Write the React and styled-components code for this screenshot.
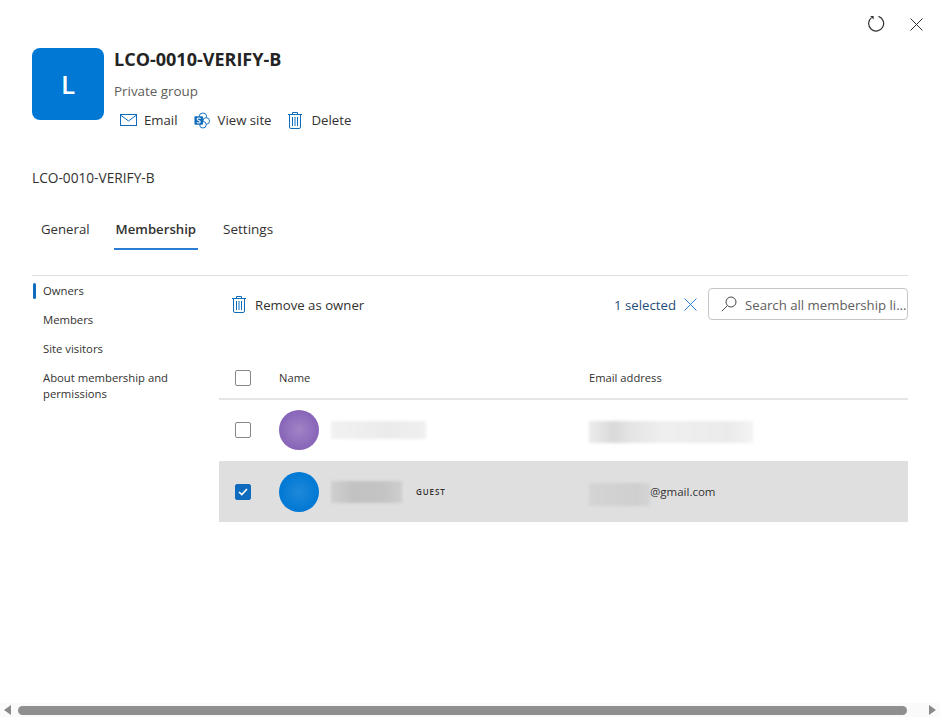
import React from "react";
import styled, { createGlobalStyle } from "styled-components";

const GlobalStyle = createGlobalStyle`
  html, body {
    margin: 0;
    padding: 0;
    background: #fff;
    overflow: hidden;
  }
  body {
    font-family: "Open Sans", "Noto Sans", "Liberation Sans", sans-serif;
    color: #323130;
  }
`;

const BLUE = "#0f6cbd";

const MailIcon = () => (
  <svg width="17" height="14" viewBox="0 0 17 14" fill="none" stroke={BLUE} strokeWidth="1">
    <rect x="0.5" y="1.5" width="16" height="11" />
    <path d="M0.5 2 L8.5 8 L16.5 2" />
  </svg>
);

const SiteIcon = () => (
  <svg width="16" height="17" viewBox="0 0 17 18" fill="none">
    <circle cx="9.5" cy="5" r="4" fill="#fff" stroke={BLUE} />
    <circle cx="13" cy="9.5" r="3.5" fill="#fff" stroke={BLUE} />
    <circle cx="9.5" cy="13.5" r="3.5" fill="#fff" stroke={BLUE} />
    <rect x="0.5" y="4.5" width="9" height="9" rx="1" fill="#0f6cbd" />
    <path d="M7 7 C6 6 3.4 6.2 3.4 7.7 C3.4 9.3 6.6 8.8 6.6 10.4 C6.6 11.9 4 12 3 11" stroke="#fff" strokeWidth="1.1" />
  </svg>
);

const TrashIcon = () => (
  <svg width="14" height="17" viewBox="0 0 14 17" fill="none" stroke={BLUE} strokeWidth="1">
    <path d="M0 2.5 H14" />
    <path d="M4.5 2.5 V0.5 H9.5 V2.5" />
    <path d="M1.5 2.5 V15 A1.5 1.5 0 0 0 3 16.5 H11 A1.5 1.5 0 0 0 12.5 15 V2.5" />
    <path d="M4.5 5 V14 M7 5 V14 M9.5 5 V14" />
  </svg>
);

const RefreshIcon = () => (
  <svg width="18" height="18" viewBox="0 0 18 18" fill="none" stroke="#323130" strokeWidth="1.2">
    <path d="M11.5 1.4 A7.5 7.5 0 1 1 4.5 2.6" />
    <path d="M3.2 1 H6.6 V4.6 Z" fill="#323130" stroke="none" />
  </svg>
);

const CloseIcon = ({ color = "#323130" }) => (
  <svg width="13" height="13" viewBox="0 0 13 13" fill="none" stroke={color} strokeWidth="1">
    <path d="M0.5 0.5 L12.5 12.5 M12.5 0.5 L0.5 12.5" />
  </svg>
);

const SearchIcon = () => (
  <svg width="16" height="16" viewBox="0 0 16 16" fill="none" stroke="#484644" strokeWidth="1">
    <circle cx="10" cy="6" r="5" />
    <path d="M6.4 9.6 L0.8 15.2" />
  </svg>
);

const CheckIcon = () => (
  <svg width="10" height="8" viewBox="0 0 10 8" fill="none" stroke="#fff" strokeWidth="1.6">
    <path d="M1 4 L3.8 6.6 L9 1" />
  </svg>
);

const App = () => {
  return (
    <Page>
      <GlobalStyle />
      <Main>
        <TopActions>
          <IconButton><RefreshIcon /></IconButton>
          <IconButton><CloseIcon /></IconButton>
        </TopActions>

        <Header>
          <GroupTile>L</GroupTile>
          <HeaderInfo>
            <Title>LCO-0010-VERIFY-B</Title>
            <Subtitle>Private group</Subtitle>
            <HeaderActions>
              <HeaderAction><MailIcon />Email</HeaderAction>
              <HeaderAction $gap={8}><SiteIcon />View site</HeaderAction>
              <HeaderAction $gap={10}><TrashIcon />Delete</HeaderAction>
            </HeaderActions>
          </HeaderInfo>
        </Header>

        <Description>LCO-0010-VERIFY-B</Description>

        <Tabs>
          <Tab>General</Tab>
          <Tab $active>Membership</Tab>
          <Tab>Settings</Tab>
        </Tabs>

        <Body>
          <SideNav>
            <SideItem $active>Owners</SideItem>
            <SideItem>Members</SideItem>
            <SideItem>Site visitors</SideItem>
            <SideItem>About membership and permissions</SideItem>
          </SideNav>

          <Content>
            <Toolbar>
              <RemoveButton><TrashIcon /><ToolbarLabel>Remove as owner</ToolbarLabel></RemoveButton>
              <ToolbarRight>
                <Selected>1 selected</Selected>
                <ClearButton><CloseIcon color="#2b7cd3" /></ClearButton>
                <SearchBox>
                  <SearchIcon />
                  <SearchText>Search all membership li...</SearchText>
                </SearchBox>
              </ToolbarRight>
            </Toolbar>

            <HeadRow>
              <CheckCell><Checkbox /></CheckCell>
              <NameCell>Name</NameCell>
              <div>Email address</div>
            </HeadRow>

            <Row>
              <CheckCell><Checkbox /></CheckCell>
              <NameCell>
                <Avatar $color="#8764b8" $light="#a183c6" />
                <Smudge $w={95} $h={18} $tone="linear-gradient(90deg, #f1f1f1, #ebebeb 60%, #efefef)" />
              </NameCell>
              <EmailCell>
                <Smudge $w={164} $h={22} $dy={4} $tone="linear-gradient(90deg, #ececec, #d9d9d9 15%, #e4e4e4 25%, #efefef 45%, #ebebeb 85%, #f4f4f4)" />
              </EmailCell>
            </Row>

            <Row $selected>
              <CheckCell><Checkbox $checked><CheckIcon /></Checkbox></CheckCell>
              <NameCell>
                <Avatar $color="#0078d4" $light="#1f88d9" />
                <Smudge $w={71} $h={22} $tone="linear-gradient(90deg, #cfcfcf, #c2c2c2 30%, #c4c4c4 75%, #cecece)" />
                <GuestTag>GUEST</GuestTag>
              </NameCell>
              <EmailCell>
                <Smudge $w={61} $h={23} $dy={6} $tone="linear-gradient(90deg, #d4d4d4, #cfcfcf 80%, #d4d4d4)" />
                <EmailText>@gmail.com</EmailText>
              </EmailCell>
            </Row>
          </Content>
        </Body>
      </Main>

      <ScrollBar>
        <Arrow $left />
        <Thumb />
        <Arrow />
      </ScrollBar>
    </Page>
  );
};

const Page = styled.div`
  width: 940px;
  height: 717px;
  display: flex;
  flex-direction: column;
  overflow: hidden;
`;
const Main = styled.div`
  flex: 1;
  padding: 14px 32px 0;
  min-height: 0;
`;
const TopActions = styled.div`
  display: flex;
  justify-content: flex-end;
  gap: 22px;
  height: 20px;
  margin-right: -17px;
`;
const IconButton = styled.div`
  width: 18px;
  height: 20px;
  display: flex;
  align-items: center;
  justify-content: center;
`;
const Header = styled.div`
  display: flex;
  gap: 10px;
  margin-top: 14px;
`;
const GroupTile = styled.div`
  width: 72px;
  height: 72px;
  border-radius: 8px;
  background: #0078d4;
  color: #fff;
  font-size: 26px;
  font-weight: 600;
  display: flex;
  align-items: center;
  justify-content: center;
`;
const HeaderInfo = styled.div`
  display: flex;
  flex-direction: column;
`;
const Title = styled.div`
  font-size: 18px;
  font-weight: 700;
  line-height: 22px;
  color: #242424;
`;
const Subtitle = styled.div`
  font-size: 13.4px;
  line-height: 18px;
  margin-top: 12px;
  color: #605e5c;
`;
const HeaderActions = styled.div`
  display: flex;
  gap: 16px;
  margin-top: 10px;
  padding-left: 6px;
`;
const HeaderAction = styled.div`
  display: flex;
  align-items: center;
  gap: ${({ $gap = 7 }) => $gap}px;
  height: 20px;
  font-size: 13.2px;
  color: #323130;
`;
const Description = styled.div`
  font-size: 13.7px;
  line-height: 18px;
  margin-top: 39px;
`;
const Tabs = styled.div`
  display: flex;
  gap: 22px;
  margin-top: 29px;
  padding-left: 7px;
`;
const Tab = styled.div`
  height: 34px;
  box-sizing: border-box;
  padding: 4px 2px 0;
  font-size: 13.2px;
  line-height: 18px;
  font-weight: ${({ $active }) => ($active ? 600 : 400)};
  color: #323130;
  border-bottom: 2px solid ${({ $active }) => ($active ? "#2b7cd3" : "transparent")};
  &:last-child {
    margin-left: 1px;
    font-size: 13.5px;
  }
`;
const Body = styled.div`
  display: flex;
  margin-top: 25px;
  border-top: 1px solid #dedede;
`;
const SideNav = styled.div`
  width: 187px;
  flex: none;
  padding-top: 7px;
`;
const SideItem = styled.div`
  position: relative;
  width: 140px;
  padding: 0 0 13px 11px;
  font-size: 11.3px;
  line-height: 16px;
  color: #323130;
  &::before {
    content: "";
    display: ${({ $active }) => ($active ? "block" : "none")};
    position: absolute;
    left: 1px;
    top: 0;
    width: 3px;
    height: 16px;
    border-radius: 2px;
    background: #0f6cbd;
  }
`;
const Content = styled.div`
  flex: 1;
  min-width: 0;
`;
const Toolbar = styled.div`
  display: flex;
  justify-content: space-between;
  align-items: center;
  height: 32px;
  margin-top: 12px;
`;
const RemoveButton = styled.div`
  display: flex;
  align-items: center;
  gap: 9px;
  padding-left: 13px;
  font-size: 13.2px;
`;
const ToolbarLabel = styled.span`
  padding-top: 2px;
`;
const ToolbarRight = styled.div`
  display: flex;
  align-items: center;
`;
const Selected = styled.div`
  font-size: 13.2px;
  padding-top: 2px;
  color: #1f4e79;
`;
const ClearButton = styled.div`
  display: flex;
  margin: 0 11px 0 8px;
`;
const SearchBox = styled.div`
  width: 200px;
  height: 32px;
  box-sizing: border-box;
  border: 1px solid #c8c6c4;
  border-radius: 4px;
  display: flex;
  align-items: center;
  gap: 8px;
  padding-left: 12px;
  overflow: hidden;
`;
const SearchText = styled.div`
  font-size: 13.2px;
  padding-top: 2px;
  color: #605e5c;
  white-space: nowrap;
`;
const HeadRow = styled.div`
  display: grid;
  grid-template-columns: 60px 310px 1fr;
  align-items: center;
  height: 62px;
  padding-top: 19px;
  box-sizing: border-box;
  margin-top: 18px;
  border-bottom: 2px solid #e5e5e5;
  font-size: 11.2px;
  color: #323130;
`;
const Row = styled.div`
  display: grid;
  grid-template-columns: 60px 310px 1fr;
  align-items: center;
  box-sizing: border-box;
  height: 61px;
  padding-bottom: ${({ $selected }) => ($selected ? 0 : 2)}px;
  background: ${({ $selected }) => ($selected ? "#dfdfdf" : "#fff")};
`;
const CheckCell = styled.div`
  padding-left: 16px;
  display: flex;
`;
const Checkbox = styled.div`
  width: 16px;
  height: 16px;
  box-sizing: border-box;
  border-radius: 2px;
  border: 1px solid ${({ $checked }) => ($checked ? "#0f6cbd" : "#8a8886")};
  background: ${({ $checked }) => ($checked ? "#0f6cbd" : "#fff")};
  display: flex;
  align-items: center;
  justify-content: center;
`;
const NameCell = styled.div`
  display: flex;
  align-items: center;
`;
const Avatar = styled.div`
  width: 40px;
  height: 40px;
  border-radius: 50%;
  background: radial-gradient(closest-side, ${({ $light }) => $light}, ${({ $color }) => $color});
  margin-right: 12px;
`;
const Smudge = styled.div`
  width: ${({ $w }) => $w}px;
  height: ${({ $h }) => $h}px;
  margin-top: ${({ $dy = 0 }) => $dy}px;
  background: ${({ $tone }) => $tone};
  filter: blur(1.5px);
`;
const GuestTag = styled.div`
  margin-left: 14px;
  font-size: 8px;
  font-weight: 600;
  letter-spacing: 0.9px;
  color: #323130;
`;
const EmailCell = styled.div`
  display: flex;
  align-items: center;
  font-size: 11.5px;
`;
const EmailText = styled.span`
  color: #323130;
`;
const ScrollBar = styled.div`
  height: 14px;
  background: #fafafa;
  display: flex;
  align-items: center;
  justify-content: space-between;
  padding: 0 4px;
  gap: 7px;
`;
const Arrow = styled.div`
  width: 0;
  height: 0;
  border-top: 5px solid transparent;
  border-bottom: 5px solid transparent;
  ${({ $left }) =>
    $left ? "border-right: 7px solid #8a8a8a;" : "border-left: 7px solid #8a8a8a;"}
`;
const Thumb = styled.div`
  flex: 1;
  height: 9px;
  border-radius: 5px;
  margin-right: 15px;
  background: #8f8f8f;
`;

export default App;
